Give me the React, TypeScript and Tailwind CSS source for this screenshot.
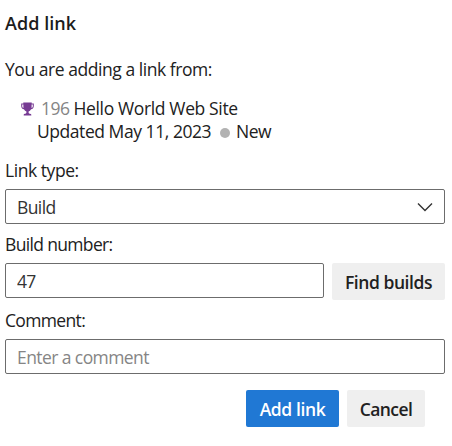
import React from "react";

function Trophy() {
  return (
    <svg width="13" height="14" viewBox="0 0 13 14" fill="#773b93" className="block shrink-0">
      <path
        fillRule="evenodd"
        d="M2.300.5h8.400v.9h2.100v2.700c0 1.900-1.100 3-2.700 3.200C9.400 8.400 8.600 9.200 7.600 9.600v1.100c.1.600.6.900 1.400 1 .9.100 1.300.5 1.300 1.100v.8H2.700v-.8c0-.6.4-1 1.300-1.100.8-.1 1.300-.4 1.400-1V9.600c-1-.4-1.800-1.200-2.500-2.300C1.300 7.100.2 6 .2 4.100V1.400h2.100V.5ZM1.200 2.400v1.700c0 1 .4 1.700 1.200 2V2.400H1.200Zm9.400 0v3.700c.8-.3 1.200-1 1.200-2V2.400h-1.200Z"
      />
    </svg>
  );
}

export default function App() {
  return (
    <main className="h-[446px] w-[452px] bg-white pt-[11px] pr-[7px] pl-[5px] font-['Open_Sans',sans-serif] text-[17.5px] leading-6 whitespace-nowrap text-[#212121]">
      <h1 className="h-6 text-[18px] font-semibold tracking-[0.05px] text-[#1c1c1c]">Add link</h1>
      <p className="mt-[22px] h-6 tracking-[-0.45px]">You are adding a link from:</p>

      <div className="mt-4 flex h-[23px] items-center pl-4 leading-[23px]">
        <div className="mt-px">
          <Trophy />
        </div>
        <span className="ml-[7px] w-[32.500px] tracking-[-0.5px] text-[#858585]">196</span>
        <span className="tracking-[-0.36px]">Hello World Web Site</span>
      </div>
      <div className="flex h-[23px] items-center pl-8 leading-[23px]">
        <span className="w-[183px] tracking-[-0.45px]">Updated May 11, 2023</span>
        <span className="mt-[3px] size-[10px] rounded-full bg-[#b2b2b2]" />
        <span className="ml-1.5 tracking-[-0.55px]">New</span>
      </div>

      <label className="mt-[15px] block h-6 tracking-[-0.45px]">Link type:</label>
      <button className="mt-[7px] flex h-[35px] w-full items-center justify-between rounded-[2px] border border-[#6c6c6c] pt-px pr-[11px] pl-[11px] text-[#333]">
        <span className="tracking-[-0.6px]">Build</span>
        <svg width="16" height="10" viewBox="0 0 16 10" fill="none" stroke="#333" strokeWidth="1.4">
          <path d="m1 1.500 7 7 7-7" />
        </svg>
      </button>

      <label htmlFor="build" className="mt-2 block h-6 tracking-[-0.66px]">Build number:</label>
      <div className="mt-[7px] flex h-[37px] items-start gap-2">
        <input id="build" defaultValue="47" className="h-[35px] w-[319px] rounded-[2px] border border-[#6c6c6c] px-[11px] pt-px tracking-[-0.7px] text-[#333]" />
        <button className="h-[37px] w-[113px] rounded-[2px] bg-[#efefef] pt-px font-semibold tracking-[-0.45px]">Find builds</button>
      </div>

      <label htmlFor="comment" className="mt-2 block h-6 tracking-[-0.66px]">Comment:</label>
      <input id="comment" placeholder="Enter a comment" className="mt-[7px] block h-[35px] w-full rounded-[2px] border border-[#6c6c6c] px-[11px] pt-px tracking-[-0.58px] placeholder:text-[#858585]" />

      <div className="mt-4 flex justify-end gap-2 pr-5">
        <button className="h-[37px] w-[93px] rounded-[2px] bg-[#2078d4] pt-px font-semibold tracking-[-0.4px] text-white">Add link</button>
        <button className="h-[37px] w-[78px] rounded-[2px] bg-[#efefef] pt-px font-semibold tracking-[-0.55px]">Cancel</button>
      </div>
    </main>
  );
}
